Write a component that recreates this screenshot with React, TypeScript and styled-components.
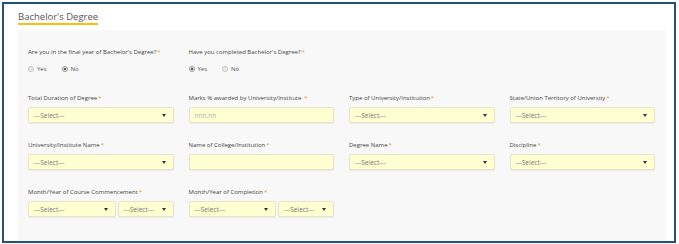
import React from "react";
import styled, { createGlobalStyle } from "styled-components";

const GlobalStyle = createGlobalStyle`
    html, body {
        margin: 0;
        padding: 0;
        background: #ffffff;
    }
    body {
        font-family: "Open Sans", "Noto Sans", "Liberation Sans", sans-serif;
    }
`;

const Frame = styled.div`
    box-sizing: border-box;
    margin: 2px 0 0 2px;
    width: 674px;
    height: 241px;
    border: 2px solid #23507f;
    background: #ffffff;
    display: flex;
    flex-direction: column;
    padding: 7px 8px 0 14px;
`;

const Title = styled.div`
    display: inline-block;
    align-self: flex-start;
    font-size: 9.5px;
    line-height: 12px;
    color: #555555;
    border-bottom: 2px solid #f5bf0f;
    margin-bottom: 5px;
`;

const Panel = styled.div`
    flex: 1;
    background: #f8f8f8;
    padding: 18px 11px 0 10px;
`;

const Grid = styled.div`
    display: grid;
    grid-template-columns: repeat(4, 1fr);
    column-gap: 15px;
    row-gap: 18px;
`;

const RadioRow = styled.div`
    grid-column: 1 / -1;
    display: grid;
    grid-template-columns: repeat(4, 1fr);
    column-gap: 15px;
    margin-bottom: 2px;
`;

const Field = styled.div`
    display: flex;
    flex-direction: column;
    min-width: 0;
`;

const Label = styled.div<{ $gap?: number }>`
    font-size: 6px;
    line-height: 9px;
    color: #444444;
    white-space: nowrap;
    margin-bottom: ${(p) => p.$gap ?? 4}px;
`;

const Star = styled.span`
    color: #f0962a;
    margin-left: 1px;
`;

const Options = styled.div`
    display: flex;
    align-items: center;
    gap: 15px;
    height: 10px;
`;

const Option = styled.label`
    display: flex;
    align-items: center;
    gap: 3px;
    font-size: 6px;
    color: #555555;
`;

const Circle = styled.span<{ $checked?: boolean }>`
    box-sizing: border-box;
    width: 6px;
    height: 6px;
    border-radius: 50%;
    border: 1px solid ${(p) => (p.$checked ? "#9a9a9a" : "#c4c4c4")};
    background: ${(p) => (p.$checked ? "#e2e2e2" : "#ececec")};
    display: flex;
    align-items: center;
    justify-content: center;

    &::after {
        content: "";
        display: ${(p) => (p.$checked ? "block" : "none")};
        width: 2px;
        height: 2px;
        border-radius: 50%;
        background: #333333;
    }
`;

const SelectBox = styled.div<{ $w?: number }>`
    box-sizing: border-box;
    height: 16px;
    flex: ${(p) => (p.$w ? `0 0 ${p.$w}px` : "1 1 auto")};
    min-width: 0;
    background: #ffffd1;
    border: 1px solid #e4e4c6;
    border-radius: 2px;
    box-shadow: 0 1px 1px rgba(0, 0, 0, 0.06);
    display: flex;
    align-items: center;
    justify-content: space-between;
    padding: 0 7px 0 5px;
    font-size: 6.5px;
    color: #777777;
    white-space: nowrap;
`;

const Caret = styled.span`
    width: 0;
    height: 0;
    border-left: 2px solid transparent;
    border-right: 2px solid transparent;
    border-top: 3px solid #333333;
`;

const Placeholder = styled.span`
    color: #b0b0b0;
`;

const Pair = styled.div`
    display: flex;
    gap: 2px;
`;

const Select = ({ w }: { w?: number }) => (
    <SelectBox $w={w}>
        <span>---Select---</span>
        <Caret />
    </SelectBox>
);

interface FieldProps {
    label: string;
    spaced?: boolean;
    children: React.ReactNode;
}

const FormField = ({ label, spaced, children }: FieldProps) => (
    <Field>
        <Label>
            {label}
            {spaced ? " " : ""}
            <Star>*</Star>
        </Label>
        {children}
    </Field>
);

const RadioGroup = ({ label, selected }: { label: string; selected: "Yes" | "No" }) => (
    <Field>
        <Label $gap={7}>
            {label}
            <Star>*</Star>
        </Label>
        <Options>
            {["Yes", "No"].map((opt) => (
                <Option key={opt}>
                    <Circle $checked={opt === selected} />
                    {opt}
                </Option>
            ))}
        </Options>
    </Field>
);

export default function App() {
    return (
        <>
            <GlobalStyle />
            <Frame>
                <Title>Bachelor's Degree</Title>
                <Panel>
                    <Grid>
                        <RadioRow>
                            <RadioGroup label="Are you in the final year of Bachelor's Degree?" selected="No" />
                            <RadioGroup label="Have you completed Bachelor's Degree?" selected="Yes" />
                        </RadioRow>

                        <FormField label="Total Duration of Degree">
                            <Select />
                        </FormField>
                        <FormField label="Marks % awarded by University/Institute" spaced>
                            <SelectBox>
                                <Placeholder>nnn.nn</Placeholder>
                            </SelectBox>
                        </FormField>
                        <FormField label="Type of University/Institution">
                            <Select />
                        </FormField>
                        <FormField label="State/Union Territory of University">
                            <Select />
                        </FormField>

                        <FormField label="University/Institute Name">
                            <Select />
                        </FormField>
                        <FormField label="Name of College/Institution">
                            <SelectBox />
                        </FormField>
                        <FormField label="Degree Name">
                            <Select />
                        </FormField>
                        <FormField label="Discipline">
                            <Select />
                        </FormField>

                        <FormField label="Month/Year of Course Commencement">
                            <Pair>
                                <Select />
                                <Select w={56} />
                            </Pair>
                        </FormField>
                        <FormField label="Month/Year of Completion">
                            <Pair>
                                <Select />
                                <Select w={56} />
                            </Pair>
                        </FormField>
                    </Grid>
                </Panel>
            </Frame>
        </>
    );
}
